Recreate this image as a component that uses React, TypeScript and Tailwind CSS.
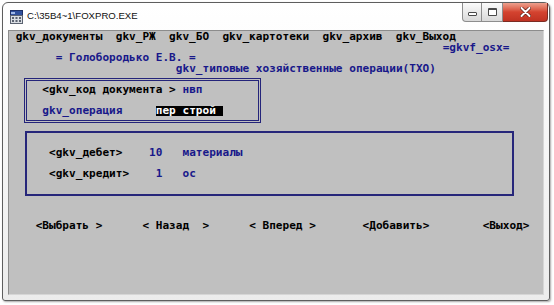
import React from 'react';

const FoxIcon = () => (
    <svg width="13" height="14" viewBox="0 0 13 14">
        <rect x="0.5" y="0.5" width="12" height="5" fill="#2f4f9c" stroke="#1d2f66" />
        <rect x="1" y="2" width="4" height="2" fill="#9fb8e8" />
        <rect x="0.5" y="5.5" width="12" height="8" fill="#d9dde3" stroke="#5b6270" />
        <rect x="2" y="7" width="2" height="2" fill="#5b6270" />
        <rect x="5.5" y="7" width="2" height="2" fill="#5b6270" />
        <rect x="9" y="7" width="2" height="2" fill="#5b6270" />
        <rect x="2" y="10" width="2" height="2" fill="#5b6270" />
        <rect x="5.5" y="10" width="2" height="2" fill="#5b6270" />
        <rect x="9" y="10" width="2" height="2" fill="#5b6270" />
    </svg>
);

const CaptionButtons = () => (
    <div className="ml-auto mr-[1px] flex h-[19px] self-start">
        <div className="flex w-[20px] items-end justify-center rounded-bl-[4px] border border-t-0 border-[#8d8d8d] bg-gradient-to-b from-[#fbfbfb] to-[#d9d9d9] pb-[5px]">
            <div className="h-[4px] w-[9px] rounded-[1px] border border-[#4a4a4a] bg-white" />
        </div>
        <div className="flex w-[21px] items-center justify-center border-b border-r border-[#8d8d8d] bg-gradient-to-b from-[#fbfbfb] to-[#d9d9d9]">
            <div className="h-[8px] w-[9px] rounded-[1px] border border-t-2 border-[#4a4a4a] bg-white" />
        </div>
        <div className="flex w-[45px] items-center justify-center rounded-br-[4px] border-b border-r border-[#7b2b22] bg-gradient-to-b from-[#eca08e] via-[#d4432f] to-[#c03222]">
            <svg width="11" height="10" viewBox="0 0 11 10">
                <path d="M1.5 1 L9.5 9 M9.5 1 L1.5 9" stroke="#5a1a12" strokeWidth="3.4" strokeLinecap="round" />
                <path d="M1.5 1 L9.5 9 M9.5 1 L1.5 9" stroke="#ffffff" strokeWidth="2" strokeLinecap="round" />
            </svg>
        </div>
    </div>
);

const FoxScreen = () => {
    const base = 'whitespace-pre';
    const blk = `${base} text-black`;
    const blu = `${base} text-[#18188a]`;

    return (
        <div className="grid grid-cols-[repeat(80,6.675px)] grid-rows-[repeat(25,10.5px)] pt-[1px] font-['DejaVu_Sans_Mono',monospace] text-[11.08px] leading-[10.5px] font-bold">
            {/* frames */}
            <div className="col-start-3 col-end-39 row-start-5 row-end-10 mx-[1.84px] my-[3.75px] border-[3px] border-double border-[#24247a]" />
            <div className="col-start-3 col-end-77 row-start-10 row-end-17 mx-[2.34px] my-[4.25px] border-2 border-[#26267a]" />

            {/* menu */}
            <div className={`col-start-2 row-start-1 ${blk}`}>gkv_документы  gkv_РЖ  gkv_БО  gkv_картотеки  gkv_архив  gkv_Выход</div>
            <div className={`col-start-66 row-start-2 ${blu}`}>=gkvf_osx=</div>
            <div className={`col-start-8 row-start-3 ${blu}`}>= Голобородько Е.В. =</div>
            <div className={`col-start-26 row-start-4 ${blu}`}>gkv_типовые хозяйственные операции(ТХО)</div>

            {/* document box */}
            <div className={`col-start-6 row-start-6 ${blk}`}>{'<gkv_код документа >'}</div>
            <div className={`col-start-27 row-start-6 ${blu}`}>нвп</div>
            <div className={`col-start-6 row-start-8 ${blu}`}>gkv_операция</div>
            <div className={`col-start-23 col-span-10 row-start-8 bg-black text-white ${base}`}>пер строй</div>

            {/* accounts box */}
            <div className={`col-start-7 row-start-12 ${blk}`}>{'<gkv_дебет>'}</div>
            <div className={`col-start-22 row-start-12 ${blu}`}>10</div>
            <div className={`col-start-27 row-start-12 ${blu}`}>материалы</div>
            <div className={`col-start-7 row-start-14 ${blk}`}>{'<gkv_кредит>'}</div>
            <div className={`col-start-23 row-start-14 ${blu}`}>1</div>
            <div className={`col-start-27 row-start-14 ${blu}`}>ос</div>

            {/* buttons */}
            <div className={`col-start-5 row-start-19 ${blk}`}>{'<Выбрать >'}</div>
            <div className={`col-start-21 row-start-19 ${blk}`}>{'< Назад  >'}</div>
            <div className={`col-start-37 row-start-19 ${blk}`}>{'< Вперед >'}</div>
            <div className={`col-start-54 row-start-19 ${blk}`}>{'<Добавить>'}</div>
            <div className={`col-start-72 row-start-19 ${blk}`}>{'<Выход>'}</div>
        </div>
    );
};

const App = () => {
    return (
        <div className="h-[305px] w-[554px] overflow-hidden bg-white pl-[2px] pt-[2px]">
            <div className="flex h-[299px] w-[548px] flex-col rounded-t-[6px] rounded-b-[3px] border border-[#5e5e5e] bg-gradient-to-b from-[#ffffff] via-[#f6f6f6] to-[#ececec] shadow-[1px_1px_2px_rgba(0,0,0,0.35)]">
                <div className="flex h-[27px] items-center pl-[7px]">
                    <FoxIcon />
                    <span className="ml-[4px] font-['Liberation_Sans',Arial,sans-serif] text-[9.6px] text-[#111]">C:\35B4~1\FOXPRO.EXE</span>
                    <CaptionButtons />
                </div>
                <div className="mx-[5px] h-[265px] border border-t-[#8c8c8c] border-l-[#8c8c8c] border-r-[#d6d6d6] border-b-[#d6d6d6] bg-[#c0c0c0]">
                    <FoxScreen />
                </div>
            </div>
        </div>
    );
};

export default App;
